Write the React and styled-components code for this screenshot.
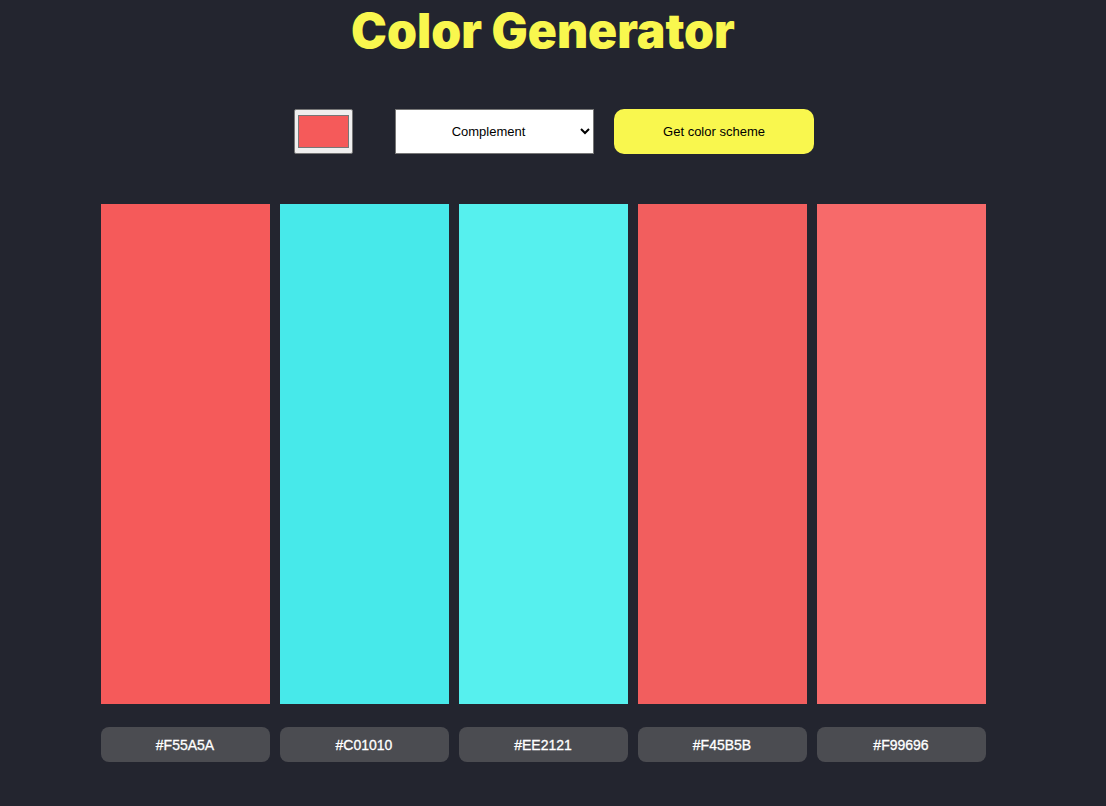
import React, {useState} from 'react';
import styled, {createGlobalStyle} from 'styled-components';

const GlobalStyle = createGlobalStyle`
  body {
    margin: 0;
    background: #23252F;
    font-family: "Liberation Sans", Arial, sans-serif;
  }
`;

const Page = styled.div`
  display: flex;
  flex-direction: column;
  align-items: center;
  padding-right: 20px;
  min-height: 806px;
  box-sizing: border-box;
`;

const Title = styled.h1`
  margin: 0;
  height: 62px;
  line-height: 62px;
  font-family: Inter, sans-serif;
  font-weight: 900;
  font-size: 48px;
  color: #F9F74E;
`;

const Controls = styled.form`
  display: flex;
  align-items: center;
  gap: 20px;
  margin-top: 47px;
  margin-left: 22px;
`;

const ColorInput = styled.input`
  width: 59px;
  height: 45px;
  margin: 0 22px 0 0;
  padding: 1px 1px;
  box-sizing: border-box;
  border: 1px solid #767676;
  border-radius: 2px;
  background: #EFEFEF;
`;

const Select = styled.select`
  width: 199px;
  height: 45px;
  box-sizing: border-box;
  border: 1px solid #767676;
  border-radius: 0;
  background: #fff;
  font-family: "Liberation Sans", Arial, sans-serif;
  font-size: 13px;
  color: #000;
  text-align: center;
  text-align-last: center;
`;

const Button = styled.button`
  width: 200px;
  height: 45px;
  border: none;
  border-radius: 10px;
  background: #F9F74E;
  font-family: "Liberation Sans", Arial, sans-serif;
  font-size: 13px;
  color: #000;
  cursor: pointer;
`;

const Row = styled.div`
  display: grid;
  grid-template-columns: repeat(5, 169px);
  gap: 10px;
  margin-top: ${p => p.top}px;
`;

const Swatch = styled.div`
  height: 500px;
  background: ${p => p.color};
`;

const Hex = styled.div`
  height: 35px;
  border-radius: 8px;
  background: #4B4C51;
  color: #fff;
  font-size: 14px;
  display: flex;
  align-items: center;
  justify-content: center;
  -webkit-text-stroke: 0.3px #fff;
`;

const colors = [
    {shown: '#F55A5A', hex: '#F55A5A'},
    {shown: '#47E9EA', hex: '#C01010'},
    {shown: '#56F0EE', hex: '#EE2121'},
    {shown: '#F25E5E', hex: '#F45B5B'},
    {shown: '#F76A6A', hex: '#F99696'},
];

const App = () => {
    const [seed, setSeed] = useState('#f55a5a');
    const [mode, setMode] = useState('complement');

    return (
        <Page>
            <GlobalStyle/>
            <Title>Color Generator</Title>
            <Controls onSubmit={e => e.preventDefault()}>
                <ColorInput type="color" value={seed} onChange={e => setSeed(e.target.value)}/>
                <Select value={mode} onChange={e => setMode(e.target.value)}>
                    <option value="monochrome">Monochrome</option>
                    <option value="complement">Complement</option>
                    <option value="analogic">Analogic</option>
                    <option value="triad">Triad</option>
                </Select>
                <Button type="submit">Get color scheme</Button>
            </Controls>
            <Row top={50}>
                {colors.map((c, i) => <Swatch key={i} color={c.shown}/>)}
            </Row>
            <Row top={23}>
                {colors.map((c, i) => <Hex key={i}>{c.hex}</Hex>)}
            </Row>
        </Page>
    );
};

export default App;
